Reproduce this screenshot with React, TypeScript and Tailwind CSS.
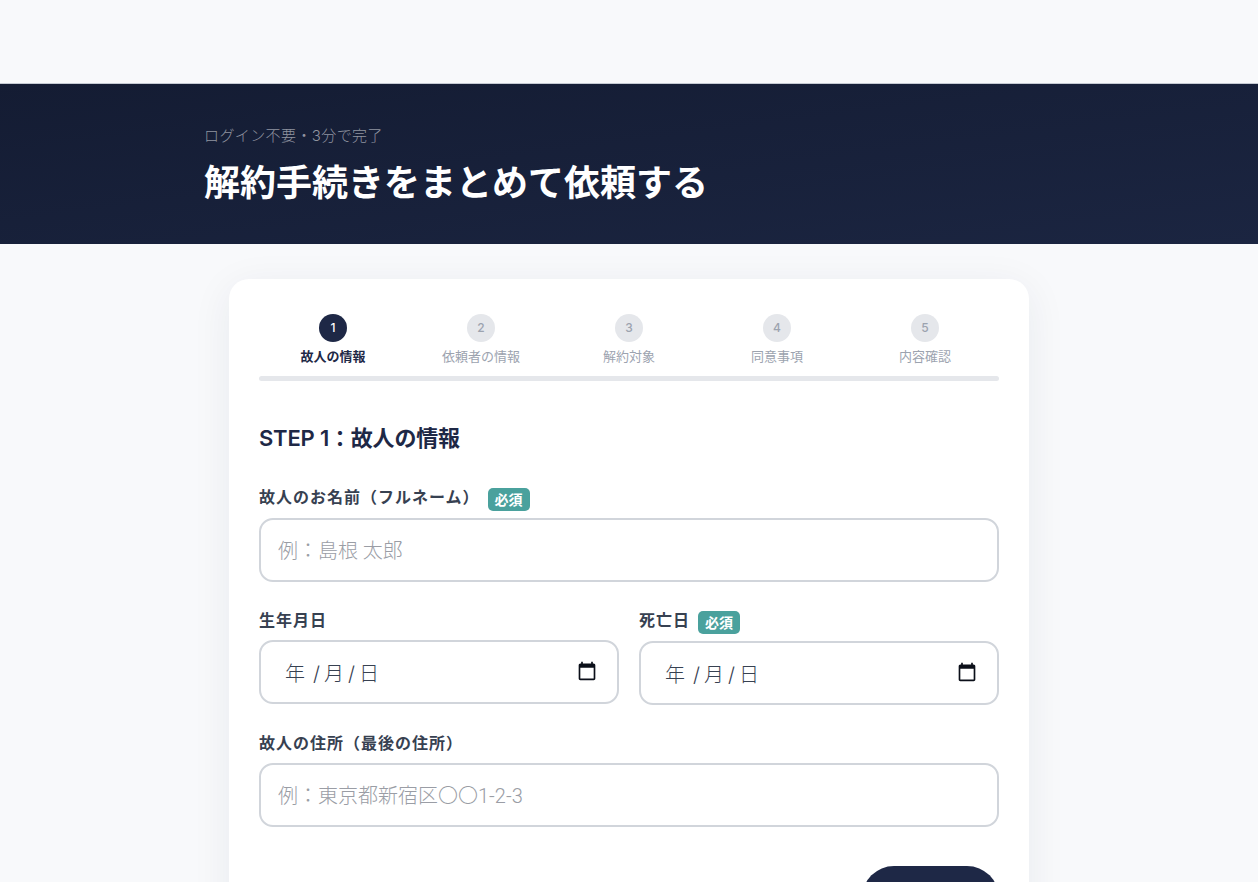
const FONT = "font-['Inter','Noto_Sans_CJK_JP',sans-serif]";

const STEPS = ["故人の情報", "依頼者の情報", "解約対象", "同意事項", "内容確認"];

const LABEL = "flex h-[29px] items-center pb-[2px] text-[16px] font-bold tracking-[1px] text-[#374151]";

function Required() {
  return (
    <span className="ml-[8px] mt-[6px] inline-flex h-[23px] w-[42px] items-center justify-center rounded-[5px] bg-[#4aa19d] text-[14px] font-bold tracking-normal text-white">
      必須
    </span>
  );
}

function CalendarIcon() {
  return (
    <svg viewBox="0 0 24 24" className="mb-[2px] h-[20px] w-[20px]" fill="#0b0f19">
      <path d="M20 3h-1V1h-2v2H7V1H5v2H4c-1.1 0-2 .9-2 2v16c0 1.1.9 2 2 2h16c1.1 0 2-.9 2-2V5c0-1.1-.9-2-2-2zm0 18H4V8h16v13z" />
    </svg>
  );
}

function TextField({ placeholder }: { placeholder: string }) {
  return (
    <input
      type="text"
      placeholder={placeholder}
      className="block h-[64px] w-full rounded-[14px] border-2 border-[#d1d5db] bg-white px-[17px] pt-[2px] font-['Roboto','Noto_Sans_CJK_JP',sans-serif] text-[20px] font-light text-[#374151] outline-none placeholder:text-[#9a9da5]"
    />
  );
}

function DateField() {
  return (
    <div className="flex h-[64px] w-full items-center justify-between rounded-[14px] border-2 border-[#d1d5db] bg-white pl-[24px] pr-[20px] text-[20px] font-light text-[#374151]">
      <span className="mt-[3px] flex items-center">
        <span>年</span>
        <span className="ml-[8px]">/</span>
        <span className="ml-[4px]">月</span>
        <span className="ml-[4px]">/</span>
        <span className="ml-[4px]">日</span>
      </span>
      <CalendarIcon />
    </div>
  );
}

export default function App() {
  return (
    <div className={`${FONT} min-h-screen bg-[#f8f9fb]`}>
      <div className="h-[84px] border-b border-[#c5cad3]" />
      <header className="h-[160px] bg-gradient-to-br from-[#141c33] to-[#1b2541] pl-[204px] pt-[42px]">
        <p className="text-[15px] font-light leading-[20px] tracking-[0.4px] text-[#9094a0]">ログイン不要・3分で完了</p>
        <h1 className="mt-[12px] text-[36px] font-bold leading-[50px] text-white">
          解約手続きをまとめて依頼する
        </h1>
      </header>

      <main className="mx-auto mt-[35px] w-[800px] rounded-[20px] bg-white px-[30px] pb-[40px] pt-[35px] shadow-[0_8px_40px_rgba(30,41,70,0.07)]">
        <ol className="grid grid-cols-5">
          {STEPS.map((label, i) => (
            <li key={label} className="flex flex-col items-center">
              <span
                className={`flex h-[28px] w-[28px] items-center justify-center rounded-full text-[12px] font-medium ${
                  i === 0 ? "bg-[#1e2846] text-white" : "bg-[#e5e7eb] text-[#9ca3af]"
                }`}
              >
                {i + 1}
              </span>
              <span
                className={`mt-[4px] text-[13px] leading-[20px] ${
                  i === 0 ? "font-bold text-[#1e2846]" : "text-[#9ca3af]"
                }`}
              >
                {label}
              </span>
            </li>
          ))}
        </ol>
        <div className="mt-[10px] h-[5px] rounded-full bg-[#e5e7eb]" />

        <h2 className="mt-[42px] text-[22px] font-semibold leading-[30px] tracking-[-0.2px] text-[#1e2846]">
          STEP 1：故人の情報
        </h2>

        <label className={`mt-[30px] ${LABEL}`}>
          故人のお名前（フルネーム）
          <Required />
        </label>
        <div className="mt-[6px]">
          <TextField placeholder="例：島根 太郎" />
        </div>

        <div className="mt-[24px] grid grid-cols-2 gap-[20px]">
          <div>
            <label className={`mb-[5px] ${LABEL}`}>生年月日</label>
            <DateField />
          </div>
          <div>
            <label className={`mb-[6px] ${LABEL}`}>
              死亡日
              <Required />
            </label>
            <DateField />
          </div>
        </div>

        <label className={`mb-[5px] mt-[24px] ${LABEL}`}>故人の住所（最後の住所）</label>
        <TextField placeholder="例：東京都新宿区〇〇1-2-3" />

        <div className="mt-[39px] flex justify-end">
          <button
            type="button"
            className="h-[64px] w-[137px] rounded-full bg-[#1e2846] text-[16px] font-bold text-white"
          >
            次へ
          </button>
        </div>
      </main>
    </div>
  );
}
